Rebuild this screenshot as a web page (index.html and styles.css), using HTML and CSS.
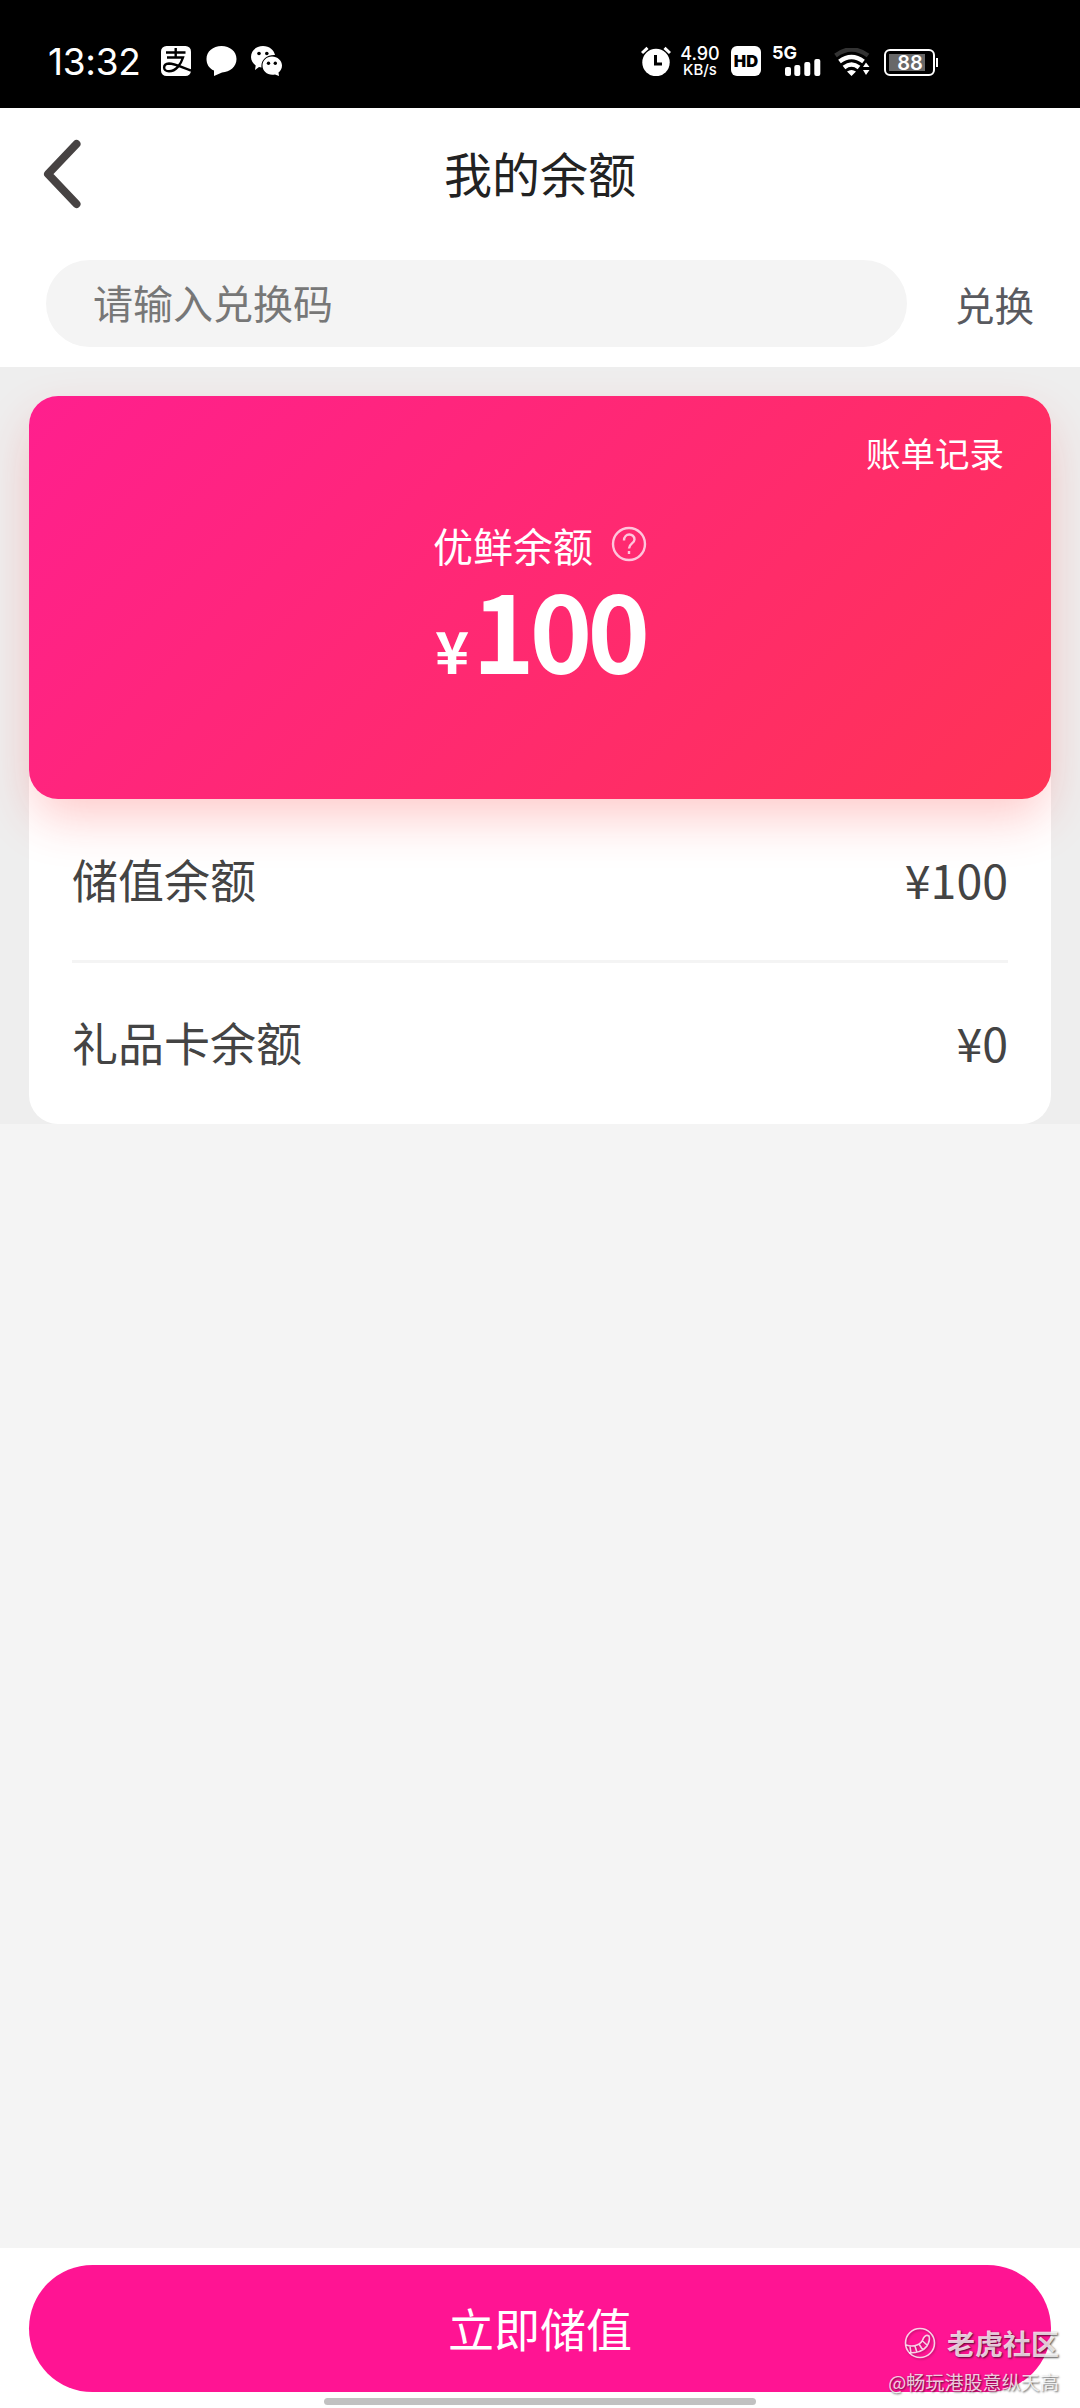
FILE: index.html
```html
<!DOCTYPE html>
<html lang="zh-CN">
<head>
<meta charset="utf-8">
<title>我的余额</title>
<link rel="stylesheet" href="styles.css">
</head>
<body>
<div class="screen">
  <div class="statusbar">
    <span class="clock">13:32</span>
    <svg class="st-icon pay" width="30" height="30" viewBox="0 0 30 30"><rect width="30" height="30" rx="5.5" fill="#fff"/><g fill="none" stroke="#000" stroke-width="2.400"><path d="M5 6.500H24.500M14.700 2V11.500M6 11.500H22C20 18 15 25.300 8 25.300C1.500 25.300 1.500 17.800 8 17.500C14 17.500 21 21.500 30 24.500"/></g></svg>
    <svg class="st-icon chat" width="31" height="30" viewBox="0 0 31 30"><path fill="#fff" d="M15.500 0C24 0 30.500 5.500 30.500 13S24 26 16 26.500L8 30V24.500C3 22.500 .5 18 .5 13C.5 5.500 7 0 15.500 0Z"/></svg>
    <svg class="st-icon wechat" width="32" height="31" viewBox="0 0 32 31"><path fill="#fff" d="M12 0C18.500 0 23 4 24 9C16 8.500 9.500 14 10.500 21.500L8 21L4 24L4.700 19.500C2 17.500 0 14.500 0 11C0 5 5 0 12 0Z"/><path fill="#fff" d="M21 10.500C26.500 10.500 31 14.500 31 19.500C31 22.500 29.500 25 27.500 26.500L28 30L24 28.500C17 30 11.500 25.500 11.500 19.500C11.500 14.500 15.500 10.500 21 10.500Z"/><g fill="#000"><circle cx="8" cy="7.500" r="1.800"/><circle cx="15.800" cy="7.500" r="1.800"/><circle cx="17.500" cy="17.300" r="1.700"/><circle cx="24.300" cy="17.300" r="1.700"/></g></svg>
    <svg class="st-icon alarm" width="30" height="30" viewBox="0 0 30 30"><circle cx="15" cy="16.500" r="13.700" fill="#fff"/><path d="M1 7L6.500 1.800M29 7L23.500 1.800" stroke="#fff" stroke-width="3"/><path d="M14.500 9V18H21" fill="none" stroke="#000" stroke-width="3"/></svg>
    <div class="speed"><span class="rate">4.90</span><span class="unit">KB/s</span></div>
    <span class="hd">HD</span>
    <div class="signal"><span class="net">5G</span><svg width="36" height="17" viewBox="0 0 36 17" fill="#fff"><rect y="8" width="6" height="9" rx="2"/><rect x="9.300" y="6" width="6" height="11" rx="2"/><rect x="19.300" y="3" width="6" height="14" rx="2"/><rect x="29.300" width="6" height="17" rx="2"/></svg></div>
    <svg class="st-icon wifi" width="36" height="28" viewBox="0 0 36 28"><g fill="none" stroke-width="4.400"><path stroke="#333" d="M1.500 7.500Q17.500 -4.500 34 7.500"/><path stroke="#fff" d="M5.500 13.500Q17.500 4.500 29.500 13.500"/><path stroke="#fff" d="M10 19.500Q17.500 13.500 25 19.500"/></g><path fill="#fff" d="M13 23.500Q17.500 20.500 22 23.500L17.500 28ZM29 19L32 14.500L35.500 19ZM29 22H35.500L32 27Z"/></svg>
    <div class="battery"><span>88</span></div>
  </div>

  <div class="navbar">
    <svg class="back" width="40" height="70" viewBox="0 0 40 70"><path d="M35.500 5L7 35L35.500 65" fill="none" stroke="#474343" stroke-width="8" stroke-linecap="round" stroke-linejoin="round"/></svg>
    <h1>我的余额</h1>
  </div>

  <div class="redeem">
    <div class="field">请输入兑换码</div>
    <span class="redeem-action">兑换</span>
  </div>

  <div class="summary">
    <div class="card">
      <div class="hero">
        <span class="bill">账单记录</span>
        <div class="label">优鲜余额<svg width="36" height="36" viewBox="0 0 36 36" fill="none" stroke="#ffc5dc" stroke-width="2.400"><circle cx="18" cy="18" r="16"/><path d="M13 14.500C13 6.500 23.500 7 23.500 13.500C23.500 17.500 18 17.500 18 22.500M18 25V28"/></svg></div>
        <div class="amount"><span class="yen">¥</span><span class="num">100</span></div>
      </div>
      <div class="row first"><span>储值余额</span><span class="value">¥100</span></div>
      <div class="row"><span>礼品卡余额</span><span class="value">¥0</span></div>
    </div>
  </div>

  <div class="footer">
    <div class="submit">立即储值</div>
    <div class="home-indicator"></div>
  </div>

  <div class="watermark">
    <div class="brand"><svg width="32" height="32" viewBox="0 0 32 32" fill="none" stroke="currentColor" stroke-width="1.600"><circle cx="16" cy="16" r="14.500"/><path d="M2 18Q8 20 13 18Q18 16 19.500 11Q22 7 25 9Q26.500 13 23 19Q18 26 5 26M6 19.500L7 26M11 19L13 25.500M15 17L18.500 22.500M18 13.500L23 18"/></svg><span>老虎社区</span></div>
    <div class="author">@畅玩港股意纵天高</div>
  </div>
</div>
</body>
</html>
```
FILE: styles.css
```css
* { box-sizing: border-box; }
body { margin: 0; background: #f4f4f4; font-family: "Noto Sans CJK SC", sans-serif; }
svg { display: block; flex: none; }
.screen { position: relative; width: 1080px; height: 2408px; display: flex; flex-direction: column; background: #f4f4f4; overflow: hidden; }

.statusbar { flex: none; height: 108px; background: #000; color: #fff; display: flex; align-items: flex-start; padding: 46px 0 0 48px; font-family: Inter, sans-serif; }
.clock { width: 113px; font-size: 37px; line-height: 31px; white-space: nowrap; letter-spacing: -.3px; }
.chat { margin-left: 15px; }
.wechat { margin-left: 14px; }
.alarm { margin-left: 358px; }
.speed { margin-left: 9px; width: 40px; display: flex; flex-direction: column; align-items: center; white-space: nowrap; }
.rate { font-size: 18px; line-height: 15px; font-weight: 500; }
.unit { font-size: 15px; line-height: 18px; font-weight: 500; }
.hd { margin-left: 11px; width: 30px; height: 30px; border-radius: 6px; background: #fff; color: #000; font: 900 16.500px/30px Inter, sans-serif; text-align: center; }
.signal { margin-left: 11px; width: 49px; height: 30px; display: flex; flex-direction: column; align-items: flex-end; justify-content: space-between; }
.net { align-self: flex-start; font-size: 18px; font-weight: 700; line-height: 14px; height: 13px; }
.wifi { margin: 2px 0 0 13px; }
.battery { position: relative; margin: 3px 0 0 14px; width: 51px; height: 27px; border: 2px solid #fff; border-radius: 6px; padding: 3px; font: 600 20px/18px Inter, sans-serif; text-align: center; }
.battery span { display: block; width: 36px; height: 17px; background: #686868; padding-left: 6px; }
.battery::after { content: ""; position: absolute; right: -5px; top: 7px; width: 2px; height: 9px; background: #fff; }

.navbar { flex: none; height: 152px; background: #fff; display: grid; grid-template-columns: 100px 1fr 100px; padding-top: 31px; }
.back { margin-left: 41px; }
h1 { margin: 0; font-size: 48px; line-height: 66px; font-weight: 400; color: #222; text-align: center; }

.redeem { flex: none; height: 107px; background: #fff; display: flex; padding-left: 46px; }
.field { width: 861px; height: 87px; border-radius: 44px; background: #f4f4f4; padding-left: 47px; font-size: 40px; line-height: 84px; color: #777; }
.redeem-action { margin-left: 48px; font-size: 39.500px; line-height: 87px; color: #595a5f; }

.summary { flex: none; height: 757px; background: #eee; padding: 29px 29px 0; overflow: hidden; }
.card { height: 728px; background: #fff; border-radius: 29px; }
.hero { height: 403px; border-radius: 29px; background: linear-gradient(135deg, #ff1f8e, #ff3355); box-shadow: 0 22px 50px -5px rgba(255, 51, 51, .27); color: #fff; display: flex; flex-direction: column; align-items: center; padding: 31px 47px 0; }
.bill { align-self: flex-end; font-size: 34.500px; line-height: 50px; }
.label { margin-top: 38px; display: flex; gap: 18px; align-items: center; font-size: 40px; line-height: 60px; }
.label svg { margin-top: -3px; }
.amount { display: flex; align-items: baseline; height: 110px; line-height: 106px; font-weight: 700; }
.yen { font-size: 58px; margin-right: 3px; }
.num { font-size: 106px; letter-spacing: -5px; margin-right: 0; }
.row { margin: 0 43px; height: 162px; display: flex; justify-content: space-between; font-size: 46px; line-height: 157px; color: #444; }
.row.first { height: 164px; border-bottom: 3px solid #f4f4f4; line-height: 159px; }
.value { font-size: 46.500px; }

.footer { margin-top: auto; flex: none; height: 160px; background: #fff; padding: 17px 29px 0; }
.submit { height: 127px; border-radius: 64px; background: #ff1493; color: #fff; font-size: 46px; line-height: 125px; text-align: center; }
.home-indicator { width: 432px; height: 7px; margin: 6px auto 0; border-radius: 4px; background: #c1c1c1; }

.watermark { position: absolute; right: 21px; bottom: 12px; display: flex; flex-direction: column; align-items: flex-end; color: rgba(255, 255, 255, .8); text-shadow: 1px 1px 2px rgba(0, 0, 0, .65); white-space: nowrap; }
.brand { display: flex; align-items: center; gap: 11px; font-size: 28px; font-weight: 700; line-height: 36px; }
.brand svg { filter: drop-shadow(1px 1px 1px rgba(0, 0, 0, .35)); }
.author { margin-top: 7px; font-size: 19.100px; line-height: 28px; }
```
